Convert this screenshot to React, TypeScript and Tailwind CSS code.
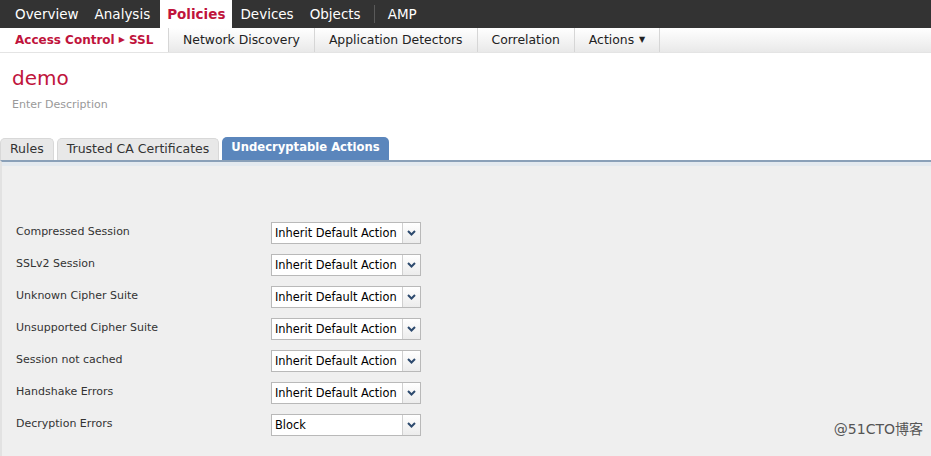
import React from 'react';

const font = { fontFamily: '"DejaVu Sans", Verdana, sans-serif' };

const topNav = ['Overview', 'Analysis', 'Policies', 'Devices', 'Objects'];
const subNav = ['Network Discovery', 'Application Detectors', 'Correlation'];

const rows: { label: string; value: string }[] = [
    { label: 'Compressed Session', value: 'Inherit Default Action' },
    { label: 'SSLv2 Session', value: 'Inherit Default Action' },
    { label: 'Unknown Cipher Suite', value: 'Inherit Default Action' },
    { label: 'Unsupported Cipher Suite', value: 'Inherit Default Action' },
    { label: 'Session not cached', value: 'Inherit Default Action' },
    { label: 'Handshake Errors', value: 'Inherit Default Action' },
    { label: 'Decryption Errors', value: 'Block' },
];

const Select: React.FC<{ value: string }> = ({ value }) => (
    <div className="flex h-[22px] w-[150px] border border-[#b9b9b9] bg-white">
        <div className="flex-1 overflow-hidden whitespace-nowrap pl-[3px] text-[11.4px] leading-[21px] text-black">{value}</div>
        <div className="flex w-[18px] items-center justify-center border-l border-[#d0d0d0] bg-gradient-to-b from-white to-[#ececec]">
            <svg width="9" height="6" viewBox="0 0 9 6">
                <path d="M1 1 L4.5 4.5 L8 1" stroke="#2d4a6e" strokeWidth="2" fill="none" />
            </svg>
        </div>
    </div>
);

export default function App() {
    return (
        <div className="relative h-[456px] w-[931px] overflow-hidden bg-white" style={font}>
            {/* top nav */}
            <div className="flex h-[28px] items-end bg-[#333333] pl-[7px]">
                {topNav.map(item =>
                    item === 'Policies' ? (
                        <div key={item} className="ml-[2px] flex h-[28px] items-center bg-white px-[7px] text-[13.5px] font-bold text-[#c0143c]">
                            {item}
                        </div>
                    ) : (
                        <div key={item} className="flex h-[28px] items-center px-[8px] text-[13.5px] text-white">
                            {item}
                        </div>
                    )
                )}
                <div className="mx-[5px] mb-[5px] h-[18px] w-px self-end bg-[#5a5a5a]" />
                <div className="flex h-[28px] items-center px-[8px] text-[13.5px] text-white">AMP</div>
            </div>

            {/* sub nav */}
            <div className="flex h-[25px] border-b border-[#e4e4e4] bg-gradient-to-b from-white to-[#e9e9e9]">
                <div className="flex w-[168px] items-center whitespace-nowrap bg-white pl-[15px] text-[12px] font-bold text-[#c0143c]">
                    Access Control <span className="mx-[4px] text-[8px]">▶</span> SSL
                </div>
                {subNav.map(item => (
                    <div key={item} className="flex items-center whitespace-nowrap border-l border-[#d6d6d6] px-[14px] text-[12.4px] text-[#222]">
                        {item}
                    </div>
                ))}
                <div className="flex items-center whitespace-nowrap border-x border-[#d6d6d6] px-[14px] text-[12.4px] text-[#222]">
                    Actions <span className="ml-[5px] text-[8px]">▼</span>
                </div>
            </div>

            {/* title */}
            <div className="px-[12px] pt-[12px]">
                <div className="text-[20px] leading-[26px] text-[#c0143c]">demo</div>
                <div className="mt-[6px] text-[11px] text-[#999]">Enter Description</div>
            </div>

            {/* tabs */}
            <div className="mt-[23px] flex h-[23px] items-end gap-[3px]">
                <div className="flex h-[22px] items-center whitespace-nowrap rounded-t-[5px] border border-b-0 border-[#d8d8d8] bg-[#e8e8e8] px-[9px] text-[12.5px] text-[#333]">
                    Rules
                </div>
                <div className="flex h-[22px] items-center whitespace-nowrap rounded-t-[5px] border border-b-0 border-[#d8d8d8] bg-[#e8e8e8] px-[9px] text-[12.5px] text-[#333]">
                    Trusted CA Certificates
                </div>
                <div className="flex h-[23px] items-center whitespace-nowrap rounded-t-[5px] bg-[#5b86bc] px-[9px] text-[11.6px] font-bold text-white">
                    Undecryptable Actions
                </div>
            </div>

            {/* panel */}
            <div className="h-[300px] border-t-[2px] border-l-[2px] border-t-[#8aa0b8] border-l-[#e2e2e2] bg-[#efefef]">
                <div className="h-[4px] bg-[#e3e9ef]" />
                <div className="flex flex-col gap-[10px] pl-[14px] pt-[56px]">
                    {rows.map(r => (
                        <div key={r.label} className="flex h-[22px] items-start">
                            <div className="w-[255px] pt-[2px] text-[11px] leading-[16px] text-[#333]">{r.label}</div>
                            <Select value={r.value} />
                        </div>
                    ))}
                </div>
            </div>

            <div
                className="absolute bottom-[16px] right-[8px] text-[14px] text-[#555]"
                style={{ fontFamily: '"DejaVu Sans", "Noto Sans CJK SC", sans-serif' }}
            >
                @51CTO博客
            </div>
        </div>
    );
}
